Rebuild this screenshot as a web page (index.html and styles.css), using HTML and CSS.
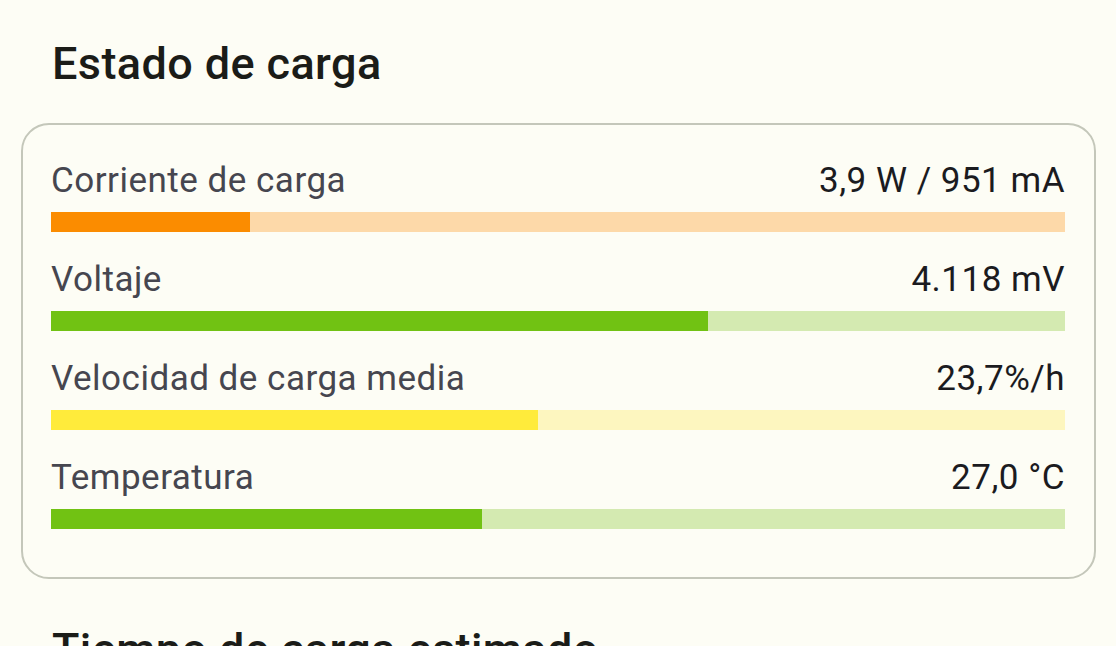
FILE: index.html
```html
<!DOCTYPE html>
<html lang="es">
<head>
<meta charset="utf-8">
<title>Estado de carga</title>
<link rel="stylesheet" href="styles.css">
</head>
<body>
<main class="page">
  <section class="section">
    <h2 class="section-title">Estado de carga</h2>
    <div class="card">
      <div class="metric">
        <div class="metric-head">
          <span class="metric-label">Corriente de carga</span>
          <span class="metric-value">3,9 W / 951 mA</span>
        </div>
        <div class="bar bar-orange"><div class="bar-fill" style="width: 19.6%"></div></div>
      </div>
      <div class="metric">
        <div class="metric-head">
          <span class="metric-label">Voltaje</span>
          <span class="metric-value">4.118 mV</span>
        </div>
        <div class="bar bar-green"><div class="bar-fill" style="width: 64.8%"></div></div>
      </div>
      <div class="metric">
        <div class="metric-head">
          <span class="metric-label">Velocidad de carga media</span>
          <span class="metric-value">23,7%/h</span>
        </div>
        <div class="bar bar-yellow"><div class="bar-fill" style="width: 48%"></div></div>
      </div>
      <div class="metric">
        <div class="metric-head">
          <span class="metric-label">Temperatura</span>
          <span class="metric-value">27,0 °C</span>
        </div>
        <div class="bar bar-green"><div class="bar-fill" style="width: 42.5%"></div></div>
      </div>
    </div>
  </section>
  <section class="section section-next">
    <h2 class="section-title">Tiempo de carga estimado</h2>
  </section>
</main>
</body>
</html>
```

FILE: styles.css
```css
* { box-sizing: border-box; }
html, body {
  margin: 0;
  padding: 0;
  background: #fdfdf5;
  font-family: Roboto, "Noto Sans", sans-serif;
  overflow: hidden;
}
.page {
  padding: 36px 20px 0 21px;
}
.section-title {
  margin: 0;
  padding-left: 31px;
  font-size: 45px;
  line-height: 56px;
  font-weight: 500;
  letter-spacing: 0.4px;
  color: #1b1c18;
}
.card {
  margin-top: 31px;
  border: 2px solid #c4c7ba;
  border-radius: 28px;
  padding: 31px 29px 48px 28px;
  display: flex;
  flex-direction: column;
  gap: 23px;
}
.metric {
  display: flex;
  flex-direction: column;
  gap: 12px;
}
.metric-head {
  display: flex;
  justify-content: space-between;
  align-items: center;
  height: 44px;
  padding-top: 6px;
  font-size: 35px;
  line-height: 44px;
  letter-spacing: 0.5px;
}
.metric-label { color: #46464f; }
.metric-value { color: #1b1b1f; }
.bar {
  height: 20px;
  display: flex;
}
.bar-fill { height: 100%; }
.bar-orange { background: #fdd9a9; }
.bar-orange .bar-fill { background: #fb8c00; }
.bar-green { background: #d4eab1; }
.bar-green .bar-fill { background: #71c213; }
.bar-yellow { background: #fdf6bf; }
.bar-yellow .bar-fill { background: #ffeb3b; }
.section-next {
  margin-top: 43px;
}
```
